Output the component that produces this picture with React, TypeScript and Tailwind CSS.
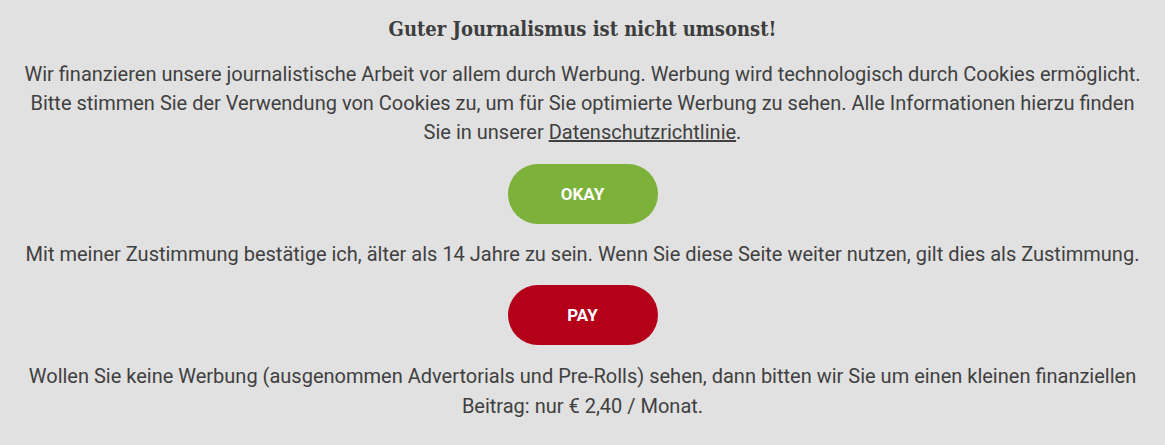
export default function App() {
  return (
    <div className="min-h-[445px] w-full bg-[#e1e1e1] px-[20px] pt-[14px] text-center text-[20px] leading-[29px] text-[#404040] [font-family:Roboto,sans-serif]">
      <h2 className="mb-[16px] text-[20px] font-bold leading-[30px] text-[#3d3d3d] [font-family:'DejaVu_Serif_Condensed','DejaVu_Serif',serif]">
        Guter Journalismus ist nicht umsonst!
      </h2>
      <p>
        Wir finanzieren unsere journalistische Arbeit vor allem durch Werbung. Werbung wird technologisch durch Cookies ermöglicht.
        Bitte stimmen Sie der Verwendung von Cookies zu, um für Sie optimierte Werbung zu sehen. Alle Informationen hierzu finden
        Sie in unserer <a className="underline">Datenschutzrichtlinie</a>.
      </p>
      <div className="mt-[17px] flex justify-center">
        <button className="h-[60px] w-[150px] rounded-full bg-[#7cb13a] text-[17px] font-bold text-white">OKAY</button>
      </div>
      <p className="mt-[16px]">
        Mit meiner Zustimmung bestätige ich, älter als 14 Jahre zu sein. Wenn Sie diese Seite weiter nutzen, gilt dies als Zustimmung.
      </p>
      <div className="mt-[16px] flex justify-center">
        <button className="h-[60px] w-[150px] rounded-full bg-[#b5001a] text-[17px] font-bold text-white">PAY</button>
      </div>
      <p className="mt-[16px] leading-[30px]">
        Wollen Sie keine Werbung (ausgenommen Advertorials und Pre-Rolls) sehen, dann bitten wir Sie um einen kleinen finanziellen
        Beitrag: nur € 2,40 / Monat.
      </p>
    </div>
  )
}
